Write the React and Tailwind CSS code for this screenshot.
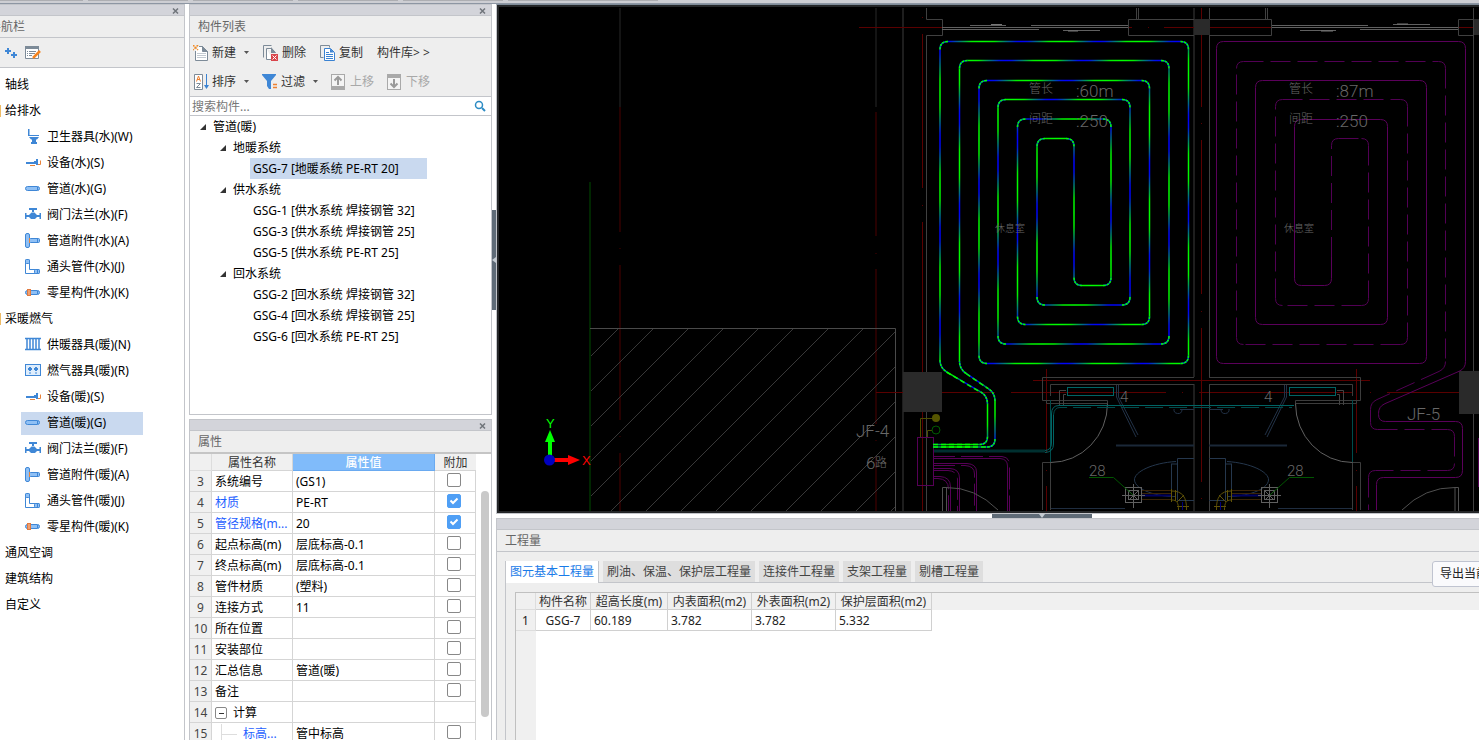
import React, { useState } from 'react';

const NAV = [
    { label: '轴线' },
    {
        label: '给排水',
        open: true,
        items: [
            { label: '卫生器具(水)(W)', icon: 'toilet' },
            { label: '设备(水)(S)', icon: 'device' },
            { label: '管道(水)(G)', icon: 'pipe' },
            { label: '阀门法兰(水)(F)', icon: 'valve' },
            { label: '管道附件(水)(A)', icon: 'fitting' },
            { label: '通头管件(水)(J)', icon: 'elbow' },
            { label: '零星构件(水)(K)', icon: 'misc' },
        ],
    },
    {
        label: '采暖燃气',
        open: true,
        items: [
            { label: '供暖器具(暖)(N)', icon: 'radiator' },
            { label: '燃气器具(暖)(R)', icon: 'gas' },
            { label: '设备(暖)(S)', icon: 'device' },
            { label: '管道(暖)(G)', icon: 'pipe' },
            { label: '阀门法兰(暖)(F)', icon: 'valve' },
            { label: '管道附件(暖)(A)', icon: 'fitting' },
            { label: '通头管件(暖)(J)', icon: 'elbow' },
            { label: '零星构件(暖)(K)', icon: 'misc' },
        ],
    },
    { label: '通风空调' },
    { label: '建筑结构' },
    { label: '自定义' },
];

const TREE = [
    { label: '地暖系统', items: ['GSG-7 [地暖系统 PE-RT 20]'] },
    {
        label: '供水系统',
        items: ['GSG-1 [供水系统 焊接钢管 32]', 'GSG-3 [供水系统 焊接钢管 25]', 'GSG-5 [供水系统 PE-RT 25]'],
    },
    {
        label: '回水系统',
        items: ['GSG-2 [回水系统 焊接钢管 32]', 'GSG-4 [回水系统 焊接钢管 25]', 'GSG-6 [回水系统 PE-RT 25]'],
    },
];

const PROPS = [
    { no: 3, name: '系统编号', value: '(GS1)' },
    { no: 4, name: '材质', value: 'PE-RT', blue: true, checked: true },
    { no: 5, name: '管径规格(m...', value: '20', blue: true, checked: true },
    { no: 6, name: '起点标高(m)', value: '层底标高-0.1' },
    { no: 7, name: '终点标高(m)', value: '层底标高-0.1' },
    { no: 8, name: '管件材质', value: '(塑料)' },
    { no: 9, name: '连接方式', value: '11' },
    { no: 10, name: '所在位置', value: '' },
    { no: 11, name: '安装部位', value: '' },
    { no: 12, name: '汇总信息', value: '管道(暖)' },
    { no: 13, name: '备注', value: '' },
    { no: 14, name: '计算', value: '', group: true },
    { no: 15, name: '标高...', value: '管中标高', blue: true, child: true },
];

const TABS = ['图元基本工程量', '刷油、保温、保护层工程量', '连接件工程量', '支架工程量', '剔槽工程量'];

// ---------- icons ----------
const NavIcon = ({ name }) => {
    const blue = '#3f87d6';
    const light = '#8fc0f5';
    return (
        <svg width="16" height="16" viewBox="0 0 16 16" className="shrink-0" aria-hidden="true">
            {name === 'toilet' && (
                <g fill={blue}>
                    <path d="M3 0h1.500v6H7v1H3z" />
                    <path d="M4 8h10l-2 2.500h-1V13h1v2H6v-2h1v-2.500H6z" />
                    <path d="M7 6h7v1H7z" />
                </g>
            )}
            {name === 'device' && (
                <g>
                    <path d="M1 7h8V6h2V4h2v6h-2V9H1z" fill={blue} />
                    <path d="M5 10.500h5M13 9.500h2.500v-4" stroke="#e8833a" fill="none" />
                </g>
            )}
            {name === 'pipe' && (
                <g>
                    <rect x="0.500" y="5.500" width="14" height="4" rx="2" fill={light} stroke={blue} />
                    <path d="M12.500 6v3" stroke={blue} />
                </g>
            )}
            {name === 'valve' && (
                <g fill={blue}>
                    <path d="M4 1h8v2H9v2H7V3H4z" />
                    <path d="M0 6h1.500v2H4l2.500-2.500h3L12 8h2.500V6H16v6h-1.500v-2H12l-2 2H6l-2-2H1.500v2H0z" />
                </g>
            )}
            {name === 'fitting' && (
                <g>
                    <rect x="0.500" y="0.500" width="4" height="14" rx="1.500" fill={light} stroke={blue} />
                    <rect x="4.500" y="5.500" width="10" height="4" rx="1" fill={light} stroke={blue} />
                    <path d="M4.500 5v5" stroke="#e8833a" />
                    <path d="M12.500 6v3" stroke={blue} />
                </g>
            )}
            {name === 'elbow' && (
                <g stroke={blue}>
                    <path d="M0.500 1h4v9.500H14v4H0.500z" fill="#fff" />
                    <rect x="0.500" y="0.500" width="4" height="4" rx="1" fill={light} />
                    <rect x="9.500" y="10.500" width="5" height="4" rx="1" fill={light} />
                    <path d="M12.500 11v3" />
                </g>
            )}
            {name === 'misc' && (
                <g>
                    <rect x="0.500" y="5.500" width="14" height="4" rx="2" fill={light} stroke={blue} />
                    <path d="M12.500 6v3" stroke={blue} />
                    <rect x="2.500" y="4.500" width="3" height="6" fill="#f0a070" stroke="#e07a40" />
                </g>
            )}
            {name === 'radiator' && (
                <path d="M0 1.500h16M0 12.500h16M2 1v12M5 1v12M8 1v12M11 1v12M14 1v12" stroke={blue} strokeWidth="1.500" fill="none" />
            )}
            {name === 'gas' && (
                <g>
                    <rect x="0.500" y="1.500" width="15" height="11" fill="#deedfc" stroke={blue} />
                    <path d="M5 4v4M3 6h4M11 4v4M9 6h4" stroke={blue} strokeWidth="2" />
                    <path d="M4 10h2M10 10h2" stroke={blue} />
                </g>
            )}
        </svg>
    );
};

const ToolIcon = ({ name }) => (
    <svg width="16" height="16" viewBox="0 0 16 16" className="shrink-0" aria-hidden="true">
        {name === 'new' && (
            <g fill="none">
                <path d="M2.500 6v9.500h12v-9l-5-5H6" fill="#fff" stroke="#7d8b98" />
                <path d="M9.500 1.500v5h5z" fill="#7d8b98" stroke="#7d8b98" />
                <path d="M4 8.500h9M4 10.500h9M4 12.500h9" stroke="#c3cad1" />
                <path d="M0 0l5 5M5 0L0 5" stroke="#f08a24" strokeWidth="1.500" strokeDasharray="2 1" />
            </g>
        )}
        {name === 'delete' && (
            <g fill="none">
                <path d="M0.500 12.500v-12h8" stroke="#7d8b98" />
                <path d="M3.500 3.500v11h6M3.500 3.500h5l4 4" fill="#fff" stroke="#7d8b98" />
                <path d="M8 2l5 6H8z" fill="#7d8b98" />
                <rect x="8" y="9" width="7" height="7" fill="#d9454b" />
                <path d="M9.500 10.500l4 4M13.500 10.500l-4 4" stroke="#fff" />
            </g>
        )}
        {name === 'copy' && (
            <g fill="none">
                <path d="M9.500 2.500v-2h-9v12h3" stroke="#7d8b98" />
                <path d="M4.500 3.500h6l4 4v8h-10z" fill="#fff" stroke="#3a82d2" />
                <path d="M10 3.500v4h4z" fill="#3a82d2" />
                <path d="M6 7.500h3M6 9.500h7M6 11.500h7M6 13.500h7" stroke="#3a82d2" />
            </g>
        )}
        {name === 'sort' && (
            <g fill="none">
                <path d="M1.500 0.500h8v15h-8z" fill="#fff" stroke="#7d8b98" />
                <path d="M3.500 7.500L5.500 2l2 5.500M4 5.500h3" stroke="#ee8130" />
                <path d="M3.500 9.500h4l-4 4h4" stroke="#7d8b98" />
                <path d="M13.500 0v12" stroke="#3a82d2" strokeWidth="1" />
                <path d="M11 11h5l-2.500 4z" fill="#3a82d2" />
            </g>
        )}
        {name === 'filter' && (
            <g>
                <path d="M0 0h14v1L9 7v8H7L5 12V7L0 1z" fill="#3f87d6" />
                <path d="M11 10.500h4M11 13.500h4" stroke="#ee8130" strokeWidth="1.500" />
            </g>
        )}
        {name === 'up' && (
            <g>
                <rect x="0.500" y="0.500" width="13" height="14" fill="#f4f4f4" stroke="#a9a9a9" />
                <path d="M0 12h14v4H0z" fill="#a9a9a9" />
                <path d="M7 11V3M3.500 6.500L7 3l3.500 3.500" stroke="#9a9a9a" strokeWidth="2" fill="none" />
            </g>
        )}
        {name === 'down' && (
            <g>
                <rect x="0.500" y="0.500" width="13" height="15" fill="#f4f4f4" stroke="#a9a9a9" />
                <path d="M0 0h14v4H0z" fill="#a9a9a9" />
                <path d="M7 5v8M3.500 9.500L7 13l3.500-3.500" stroke="#9a9a9a" strokeWidth="2" fill="none" />
            </g>
        )}
    </svg>
);

const Caret = () => (
    <svg width="5" height="3" viewBox="0 0 5 3" className="ml-[5px] shrink-0" aria-hidden="true">
        <path d="M0 0h5L2.500 3z" fill="#555" />
    </svg>
);

// ---------- shared panel pieces ----------
const TitleStrip = ({ closable = true }) => (
    <div className="flex h-[11px] shrink-0 items-end justify-end border-b border-[#c3c5ca] bg-[#d3d4da] pr-[5px] pb-px">
        {closable && (
            <button type="button" aria-label="关闭">
                <svg width="7" height="6" viewBox="0 0 7 6" className="block">
                    <path d="M1 0.500l5 5M6 0.500l-5 5" stroke="#70757b" strokeWidth="1.500" />
                </svg>
            </button>
        )}
    </div>
);

const ToolButton = ({ icon, label, caret, disabled }) => (
    <button
        type="button"
        disabled={disabled}
        className={`flex items-center gap-[3px] whitespace-nowrap ${disabled ? 'text-[#a8a8a8]' : 'text-[#333]'}`}
    >
        {icon && <ToolIcon name={icon} />}
        {label}
        {caret && <Caret />}
    </button>
);

const NavPanel = () => {
    const [active, setActive] = useState('管道(暖)(G)');

    return (
        <aside className="flex w-[185px] shrink-0 flex-col overflow-hidden border-t border-r border-[#c3c5ca] bg-white">
            <TitleStrip />
            <h2 className="-ml-[11px] flex h-[22px] shrink-0 items-center border-b border-[#c3c5ca] bg-[#eee] text-[#666]">
                导航栏
            </h2>
            <div className="flex h-[30px] shrink-0 items-center gap-2 border-b border-[#c3c5ca] bg-[#eee] pl-[5px]">
                <button type="button" aria-label="添加">
                    <svg width="12" height="12" viewBox="0 0 12 12">
                        <path d="M3 1v6M0 4h6M9 5v6M6 8h6" stroke="#3f87d6" strokeWidth="2" />
                    </svg>
                </button>
                <button type="button" aria-label="编辑">
                    <svg width="16" height="14" viewBox="0 0 16 14">
                        <path d="M0.500 0.500h13v12h-13z" fill="#fff" stroke="#7d8b98" />
                        <path d="M0 0h14v3H0z" fill="#7d8b98" />
                        <path d="M2 5.500h1M4 5.500h7M2 7.500h1M4 7.500h6M2 9.500h1M4 9.500h3" stroke="#7d8b98" />
                        <path d="M8 12l7-7" stroke="#f5841f" strokeWidth="2.500" />
                    </svg>
                </button>
            </div>
            <nav className="pt-1">
                {NAV.map((group) => (
                    <div key={group.label}>
                        <div className="flex h-[26px] items-center">
                            <span className={`h-3 w-px ${group.open ? 'bg-[#eebb66]' : ''}`} />
                            <a href="#nav" className="pl-1">
                                {group.label}
                            </a>
                        </div>
                        {group.items?.map((item) => (
                            <div key={item.label} className="flex h-[26px] items-center pl-[21px]">
                                <button
                                    type="button"
                                    onClick={() => setActive(item.label)}
                                    className={`flex h-[23px] w-[122px] items-center gap-[6px] pl-1 whitespace-nowrap ${
                                        active === item.label ? 'bg-[#c9d9ef]' : ''
                                    }`}
                                >
                                    <NavIcon name={item.icon} />
                                    {item.label}
                                </button>
                            </div>
                        ))}
                    </div>
                ))}
            </nav>
        </aside>
    );
};

const Twisty = () => (
    <svg width="6" height="6" viewBox="0 0 6 6" className="shrink-0" aria-hidden="true">
        <path d="M6 0v6H0z" fill="#333" />
    </svg>
);

const ComponentList = () => {
    const [selected, setSelected] = useState(TREE[0].items[0]);

    return (
        <section className="flex h-[411px] shrink-0 flex-col border border-[#c3c5ca] bg-white">
            <TitleStrip />
            <h2 className="flex h-[22px] shrink-0 items-center border-b border-[#c3c5ca] bg-[#eee] pl-2 text-[#666]">
                构件列表
            </h2>
            <div className="h-[59px] shrink-0 border-b border-[#c3c5ca] bg-[#eee] pl-[3px]">
                <div className="flex h-[29px] items-center gap-[14px]">
                    <ToolButton icon="new" label="新建" caret />
                    <ToolButton icon="delete" label="删除" />
                    <ToolButton icon="copy" label="复制" />
                    <ToolButton label="构件库> >" />
                </div>
                <div className="flex h-[29px] items-center gap-[13px]">
                    <ToolButton icon="sort" label="排序" caret />
                    <ToolButton icon="filter" label="过滤" caret />
                    <ToolButton icon="up" label="上移" disabled />
                    <ToolButton icon="down" label="下移" disabled />
                </div>
            </div>
            <div className="flex h-[19px] shrink-0 items-center border-b border-[#c3c5ca] pr-[5px]">
                <input
                    type="text"
                    aria-label="搜索构件"
                    placeholder="搜索构件..."
                    className="h-[18px] min-w-0 flex-1 pl-[2px] outline-none placeholder:text-[#777]"
                />
                <svg width="12" height="12" viewBox="0 0 12 12" aria-hidden="true">
                    <circle cx="5" cy="5" r="3.500" fill="none" stroke="#2d8cc4" strokeWidth="1.500" />
                    <path d="M8 8l3 3" stroke="#2d8cc4" strokeWidth="2" />
                </svg>
            </div>
            <div className="overflow-hidden">
                <div className="flex h-[21px] items-center gap-[7px] pl-[10px]">
                    <Twisty />
                    管道(暖)
                </div>
                {TREE.map((group) => (
                    <div key={group.label}>
                        <div className="flex h-[21px] items-center gap-[7px] pl-[30px]">
                            <Twisty />
                            {group.label}
                        </div>
                        {group.items.map((item) => (
                            <button
                                key={item}
                                type="button"
                                onClick={() => setSelected(item)}
                                className={`ml-[60px] flex h-[21px] w-[177px] items-center pl-[3px] whitespace-nowrap ${
                                    selected === item ? 'bg-[#c9d9ef]' : ''
                                }`}
                            >
                                {item}
                            </button>
                        ))}
                    </div>
                ))}
            </div>
        </section>
    );
};

const PropCheck = ({ label, initial }) => (
    <span className="relative mx-auto block size-[14px]">
        <input
            type="checkbox"
            aria-label={label}
            defaultChecked={initial}
            className="peer block size-[14px] appearance-none rounded-[2px] border border-[#888] bg-white checked:border-[#4f9ff5] checked:bg-[#4f9ff5]"
        />
        <svg
            width="14"
            height="14"
            viewBox="0 0 14 14"
            className="pointer-events-none absolute inset-0 hidden peer-checked:block"
            aria-hidden="true"
        >
            <path d="M3.500 6.500L6 9l4.500-4.500" fill="none" stroke="#fff" strokeWidth="2" />
        </svg>
    </span>
);

const PropertyPanel = () => (
    <section className="flex min-h-0 flex-1 flex-col overflow-hidden border border-b-0 border-[#c3c5ca] bg-white">
        <TitleStrip />
        <h2 className="flex h-[23px] shrink-0 items-center border-b-2 border-[#c5c5c5] bg-[#eee] pl-2 text-[#666]">
            属性
        </h2>
        <div className="flex min-h-0 flex-1 overflow-hidden">
            <table className="w-[286px] table-fixed border-separate border-spacing-0 self-start">
                <colgroup>
                    <col className="w-[22px]" />
                    <col className="w-[81px]" />
                    <col className="w-[142px]" />
                    <col className="w-[41px]" />
                </colgroup>
                <thead>
                    <tr className="h-[17px] bg-[#f0f0f0] leading-[14px] text-[#333]">
                        <th className="border-r border-b border-[#ddd]" />
                        <th className="border-r border-b border-[#d5d5d5] pt-[2px] font-normal">属性名称</th>
                        <th className="border-r border-b border-[#6aaaf0] bg-[#80bbfa] pt-[2px] font-medium text-white">属性值</th>
                        <th className="border-b border-[#d5d5d5] pt-[2px] font-normal">附加</th>
                    </tr>
                </thead>
                <tbody>
                    {PROPS.map((row) => (
                        <tr key={row.no} className="h-[21px] leading-[18px]">
                            <td className="border-r border-b border-[#d5d5d5] bg-[#f0f0f0] pt-[2px] text-center text-[#444]">
                                {row.no}
                            </td>
                            <td
                                className={`overflow-hidden border-r border-b border-[#d5d5d5] pt-[2px] pl-[3px] whitespace-nowrap ${
                                    row.blue ? 'text-[#1f5fff]' : ''
                                }`}
                            >
                                {row.group && (
                                    <span className="flex items-center gap-[6px]">
                                        <button
                                            type="button"
                                            aria-label="折叠"
                                            className="flex size-[12px] items-center justify-center rounded-[2px] border border-[#888]"
                                        >
                                            <span className="h-px w-[5px] bg-[#333]" />
                                        </button>
                                        {row.name}
                                    </span>
                                )}
                                {row.child && (
                                    <span className="ml-[6px] flex h-[18px] items-center gap-[6px]">
                                        <span className="h-5 w-px bg-[#ddd]" />
                                        <span className="-ml-[6px] h-px w-[15px] bg-[#ddd]" />
                                        {row.name}
                                    </span>
                                )}
                                {!row.group && !row.child && row.name}
                            </td>
                            <td className="border-r border-b border-[#d5d5d5] pt-[2px] pl-[3px]">{row.value}</td>
                            <td className="border-r border-b border-[#d5d5d5] pr-[2px] pb-[2px]">
                                {!row.group && <PropCheck label={`附加 ${row.name}`} initial={row.checked} />}
                            </td>
                        </tr>
                    ))}
                </tbody>
            </table>
            <div className="flex-1 pt-[37px] pl-[5px]">
                <div className="h-[226px] w-2 rounded-full bg-[#c9c9c9]" />
            </div>
        </div>
    </section>
);

// ---------- drawing ----------
// Splits a polyline into straight runs and rounded corners
const roundPath = (pts, r) => {
    let lines = '';
    let arcs = '';
    let start = pts[0];
    for (let i = 1; i < pts.length; i++) {
        const [x, y] = pts[i];
        const dx = x - start[0];
        const dy = y - start[1];
        const len = Math.hypot(dx, dy);
        if (i === pts.length - 1) {
            lines += `M${start}L${x},${y}`;
            break;
        }
        const end = [x - (dx / len) * r, y - (dy / len) * r];
        const nx = pts[i + 1][0] - x;
        const ny = pts[i + 1][1] - y;
        const nlen = Math.hypot(nx, ny);
        const next = [x + (nx / nlen) * r, y + (ny / nlen) * r];
        lines += `M${start}L${end}`;
        arcs += `M${end}Q${x},${y} ${next}`;
        start = next;
    }
    return { lines, arcs };
};

const LEFT_LOOP = roundPath(
    [
        [933, 447], [995, 447], [995, 393], [959.5, 369], [959.5, 60.5], [1169, 60.5], [1169, 344], [998, 344], [998, 99.5],
        [1130, 99.5], [1130, 305], [1037, 305], [1037, 138.5], [1074, 138.5], [1074, 285.5], [1111, 285.5], [1111, 119],
        [1017.5, 119], [1017.5, 324.5], [1149.5, 324.5], [1149.5, 80.5], [979, 80.5], [979, 363.5], [1188.5, 363.5],
        [1188.5, 41.5], [940, 41.5], [940, 368], [987.5, 396], [987.5, 444.5], [933, 444.5],
    ],
    8
);

const RIGHT_SUPPLY = roundPath(
    [
        [1331.5, 257], [1331.5, 285.5], [1294.5, 285.5], [1294.5, 119.5], [1387.5, 119.5], [1387.5, 324.5], [1255.5, 324.5],
        [1255.5, 80.5], [1426.5, 80.5], [1426.5, 363.5], [1216.5, 363.5], [1216.5, 41.5], [1465.5, 41.5], [1465.5, 368.5],
        [1378.5, 406.5], [1378.5, 421.5], [1462.5, 421.5], [1462.5, 477.5], [1376.5, 477.5], [1376.5, 510],
    ],
    7
);

const RIGHT_RETURN = roundPath(
    [
        [1331.5, 257], [1331.5, 138.5], [1368.5, 138.5], [1368.5, 305.5], [1275.5, 305.5], [1275.5, 99.5], [1407.5, 99.5],
        [1407.5, 344.5], [1236.5, 344.5], [1236.5, 61.5], [1445.5, 61.5], [1445.5, 368.5], [1370.5, 402.5], [1370.5, 429.5],
        [1454.5, 429.5], [1454.5, 470.5], [1368.5, 470.5], [1368.5, 510],
    ],
    7
);

const HATCH = [...Array(14)].map((_, i) => 947 + i * 35);

const Bathroom = () => (
    <g fill="none">
        <path d="M1194 377.500H1042.500V400.500H1107.500V403.500H1046.500V400M1194 384.500H1050.500V396M1042.500 510V462.500H1050.500M1050.500 462V510" stroke="#3c3c3c" />
        <path d="M1107.500 403.500A57 59 0 0 1 1050.500 462.500" stroke="#606060" />
        <path d="M1066 390.500H1059.500V405M1066 394.500H1063.500V405" stroke="#444" />
        <rect x="1067.500" y="387.500" width="46" height="8" stroke="#006464" />
        <path d="M1050.500 400V462" stroke="#004c4c" />
        <path d="M1116.500 385V397L1136 437M1118.500 385V397L1138 435" stroke="#223247" />
        <path d="M1116 445.500H1194" stroke="#1b2838" strokeWidth="2" />
        <path d="M1194 409.500H1180M1174 409a4 4 0 1 0 8 1" stroke="#223247" />
        <path d="M1194 458.500H1177.500V500.500H1194M1171.500 464V496M1176 461.500C1152 463 1134 472 1134.500 480C1135 490 1158 497 1176 496.500M1177 464H1171" stroke="#25374d" />
        <path d="M1142 490.500H1172M1142 499.500H1172M1142 493.500H1172" stroke="#3a2308" />
        <path d="M1142 495.500H1172" stroke="#000060" strokeWidth="2" />
        <path d="M1172 491C1182 491 1187 497 1186.500 510M1172 500C1177 500 1178.500 503 1178.500 510M1171.500 489V502M1175.500 490V501M1177 506.500H1189M1177 502L1184 495" stroke="#5f5208" />
        <path d="M1182.500 502V510" stroke="#00007a" />
        <g stroke="#606060">
            <rect x="1125.500" y="487.500" width="16" height="15" />
            <rect x="1128.500" y="490.500" width="10" height="9" />
            <path d="M1122 495.500H1145M1133.500 484V508M1129 491L1138 500M1138 491L1129 500" />
        </g>
        <path d="M1089 477.500H1113.500L1133 495" stroke="#005500" />
        <path d="M1051 508.500H1125" stroke="#1f2d40" />
    </g>
);

const Drawing = () => (
    <svg viewBox="499 7 980 504" preserveAspectRatio="xMinYMin slice" className="block h-full w-full" role="img" aria-label="平面图">
        <defs>
            <linearGradient id="flow" gradientUnits="userSpaceOnUse" x1="1022" y1="41" x2="1045" y2="60" spreadMethod="reflect">
                <stop offset="0" stopColor="#0000ff" />
                <stop offset="0.150" stopColor="#0010e8" />
                <stop offset="0.550" stopColor="#00b040" />
                <stop offset="0.700" stopColor="#00f000" />
                <stop offset="1" stopColor="#00ff00" />
            </linearGradient>
            <clipPath id="hatchArea">
                <rect x="591" y="329" width="304" height="182" />
            </clipPath>
        </defs>
        <rect x="499" y="7" width="980" height="504" fill="#000" />

        {/* axis lines and walls */}
        <g fill="none">
            <path d="M620 8V107M876 8V107" stroke="#141414" strokeWidth="2" />
            <path d="M620 107V232M620 248v1M620 265V420M620 436v1M620 453V511M876 112V236M876 253v1M876 269V424M876 440v1M876 456V511" stroke="#260000" strokeWidth="2" />
            <path d="M590 182V511" stroke="#002600" strokeWidth="2" />
            <path d="M903 8V511M1194 8V377M1194 384V511" stroke="#1e1e1e" strokeWidth="2" />
            <g clipPath="url(#hatchArea)" stroke="#383838">
                {HATCH.map((c) => (
                    <path key={c} d={`M${c - 328} 328L${c - 511} 511`} />
                ))}
            </g>
            <path d="M590 328.500H895.500V511" stroke="#4a4a4a" />
            <path
                d="M922.500 17v1M922.500 34V188M922.500 205v1M922.500 222V511M1201.500 8V107M1201.500 123v1M1201.500 140V294M1201.500 311v1M1201.500 328V482M1201.500 498v1M1046.500 369V453M1046.500 470v1M1046.500 486V511M1356.500 369V453M1356.500 470v1M1356.500 486V511M859 27.500H942M1128 27.500H1132M1148 27.500h1M1164 27.500H1272M1458 27.500H1474M876 392.500H903M942 392.500H995M1011 392.500H1166M1182 392.500h1M1199 392.500H1353M1370 392.500h1M1387 392.500H1459M1033 380.500H1370"
                stroke="#5a0000"
            />
            <path d="M926.500 8V19.500H942.500V35.500H926.500V511M1194 19.500H1128.500V35.500H1194M1209 19.500H1271.500V35.500H1209M1474 19.500H1458.500V35.500H1474M1209.500 8V377M1209.500 384V511M1473.500 8V511M1136.500 8V19M1138.500 8V19M1265.500 8V19M1267.500 8V19" stroke="#404040" />
            <path d="M942 27.500H1128M1031 25.500H1128M942 29.500H1039M970 25.500H1006M1063 30.500H1100M1272 25.500H1368M1272 27.500H1458M1360 29.500H1458M1300 30.500H1336M1393 24.500H1430" stroke="#606060" />
            <path d="M991 24.500H1002M1068 31H1078M1321 31H1333M1397 24H1408" stroke="#777" />
        </g>
        <g fill="#2a2a2a">
            <rect x="1194" y="19" width="16" height="16" />
            <rect x="1474" y="19" width="5" height="16" />
            <rect x="903" y="372" width="39" height="40" />
            <rect x="1459" y="371" width="20" height="43" />
        </g>

        <Bathroom />
        <g transform="translate(2403 0) scale(-1 1)">
            <Bathroom />
        </g>

        {/* supply and return headers */}
        <g fill="none">
            <path d="M933 451H1045" stroke="#003030" strokeWidth="3" />
            <path d="M1045 450.500Q1051.500 450 1051.500 443V414Q1051.500 405.500 1059 405.500H1294M1045 452.500Q1053.500 452 1053.500 444V415" stroke="#006464" />
            <path d="M1053.500 415Q1054 407.500 1060 407.500H1292" stroke="#004c4c" strokeDasharray="18 6" />
            <g stroke="#560056">
                <rect x="917.500" y="437.500" width="16" height="48" />
                <path d="M933 458.500H1000Q1007.500 459 1007.500 466V511M933 463.500H967Q976.500 464 976.500 472V511M933 468.500H950Q959.500 469 959.500 478V511M933 476.500H940Q950.500 477 950.500 487V511" />
                <path d="M933 456.500H1002Q1009.500 457 1009.500 465V511M933 465.500H965Q974.500 466 974.500 474V511M933 470.500H948Q957.500 471 957.500 480V511M933 478.500H938Q948.500 479 948.500 489V511" strokeDasharray="22 6" />
                <path d="M1478.500 438V487" />
            </g>
            <path d="M942.500 511V487.500H946.500V511M1458.500 511V487.500H1455V511M946 487.500Q975 487 998 510M1455 487.500Q1425 487 1402 510" stroke="#505050" />
            <path d="M920.500 437V418.500H933M927.500 437V430.500H932" stroke="#4d4d00" />
            <circle cx="936" cy="418" r="4" fill="#555500" />
            <circle cx="936" cy="430" r="4" stroke="#005a00" />
        </g>

        {/* floor heating loops */}
        <g fill="none">
            <path d={RIGHT_SUPPLY.lines + RIGHT_SUPPLY.arcs} stroke="#5a005a" />
            <path d={RIGHT_RETURN.lines} stroke="#520054" strokeDasharray="20 7" />
            <path d={RIGHT_RETURN.arcs} stroke="#520054" />
            <path d={LEFT_LOOP.lines} stroke="url(#flow)" strokeWidth="1.500" />
            <path d={LEFT_LOOP.arcs} stroke="#0040e0" strokeWidth="1.500" />
            <path d={LEFT_LOOP.arcs} stroke="#00ff00" strokeWidth="1.500" strokeDasharray="2.500 1" />
            <path d="M933 444.500H980M933 447H988M946.500 372L980 392M966 373.500L988 388.500" stroke="#00ff00" strokeWidth="1.500" strokeDasharray="5 3" />
        </g>

        {/* annotations */}
        <g fill="#686868" className="font-['Liberation_Sans_Narrow','Roboto','Noto_Sans_CJK_SC',sans-serif] font-light">
            <g fontSize="17">
                <text x="1076" y="97">:60m</text>
                <text x="1076" y="127">:250</text>
                <text x="1336" y="97">:87m</text>
                <text x="1336" y="127">:250</text>
                <text x="856" y="437">JF-4</text>
                <text x="1407" y="420">JF-5</text>
                <text x="866" y="469">6</text>
            </g>
            <g fontSize="15">
                <text x="1089" y="476">28</text>
                <text x="1287" y="476">28</text>
                <text x="1120" y="402">4</text>
                <text x="1264" y="402">4</text>
            </g>
            <g fontSize="12">
                <text x="1029" y="93">管长</text>
                <text x="1029" y="123">间距</text>
                <text x="1289" y="93">管长</text>
                <text x="1289" y="123">间距</text>
                <text x="875" y="467">路</text>
            </g>
            <g fontSize="10">
                <text x="995" y="232">休息室</text>
                <text x="1284" y="232">休息室</text>
            </g>
        </g>

        {/* UCS marker */}
        <rect x="548" y="440" width="4" height="17" fill="#00ff00" />
        <path d="M550 430L555 442H545z" fill="#00ff00" />
        <rect x="553" y="458" width="16" height="4" fill="#ff0000" />
        <path d="M580 460L568 455V465z" fill="#ff0000" />
        <circle cx="549.500" cy="460" r="5.500" fill="#0000c0" />
        <g fontSize="13" className="font-['Liberation_Sans',sans-serif]">
            <text x="546" y="428" fill="#00ff00">Y</text>
            <text x="582" y="465" fill="#ff0000">X</text>
        </g>
    </svg>
);

const QuantityPanel = () => {
    const [tab, setTab] = useState(TABS[0]);

    return (
        <section className="ml-1 flex h-[222px] shrink-0 flex-col overflow-hidden border-t border-l border-[#c3c5ca] bg-[#eee]">
            <TitleStrip closable={false} />
            <h2 className="flex h-[22px] shrink-0 items-center border-b border-[#c3c5ca] pl-2 text-[#666]">工程量</h2>
            <div className="flex min-h-0 flex-1 flex-col pt-[9px] pl-2">
                <div className="flex h-[22px] shrink-0 gap-1 border-b border-[#c3c5ca]" role="tablist">
                    {TABS.map((name) => (
                        <button
                            key={name}
                            type="button"
                            role="tab"
                            aria-selected={tab === name}
                            onClick={() => setTab(name)}
                            className={
                                tab === name
                                    ? '-mb-px shrink-0 border-r border-l border-[#c3c5ca] bg-white px-1 whitespace-nowrap text-[#1a7be8]'
                                    : 'shrink-0 bg-[#dedede] px-1 whitespace-nowrap text-[#444]'
                            }
                        >
                            {name}
                        </button>
                    ))}
                    <div className="ml-auto h-[26px] w-[47px] shrink-0 overflow-hidden">
                        <button
                            type="button"
                            className="h-[26px] rounded-[3px] border border-[#c0c4d0] bg-[#fafafc] px-[7px] whitespace-nowrap text-[#222]"
                        >
                            导出当前工程量
                        </button>
                    </div>
                </div>
                <div className="min-h-0 flex-1 border-l border-[#c3c5ca] pt-[9px] pl-[9px]">
                    <table className="h-full w-full table-fixed border-separate border-spacing-0 border-t border-l border-[#c0c0c0] bg-white">
                        <colgroup>
                            <col className="w-[20px]" />
                            <col className="w-[55px]" />
                            <col className="w-[77px]" />
                            <col className="w-[84px]" />
                            <col className="w-[84px]" />
                            <col className="w-[96px]" />
                            <col />
                        </colgroup>
                        <thead>
                            <tr className="h-[17px] bg-[#f0f0f0] leading-[14px] whitespace-nowrap text-[#333]">
                                <th className="border-r border-b border-[#ddd]" />
                                {['构件名称', '超高长度(m)', '内表面积(m2)', '外表面积(m2)', '保护层面积(m2)'].map((h) => (
                                    <th key={h} className="border-r border-b border-[#d0d0d0] pt-[2px] font-normal">
                                        {h}
                                    </th>
                                ))}
                                <th />
                            </tr>
                        </thead>
                        <tbody>
                            <tr className="h-[21px] leading-[18px] text-[#222]">
                                <td className="border-r border-b border-[#ddd] bg-[#f0f0f0] pt-[2px] text-center">1</td>
                                <td className="border-r border-b border-[#d0d0d0] pt-[2px] text-center">GSG-7</td>
                                {['60.189', '3.782', '3.782', '5.332'].map((v, i) => (
                                    <td key={i} className="border-r border-b border-[#d0d0d0] pt-[2px] pl-[3px]">
                                        {v}
                                    </td>
                                ))}
                                <td />
                            </tr>
                            <tr>
                                <td className="bg-[#f0f0f0]" />
                                <td colSpan={6} />
                            </tr>
                        </tbody>
                    </table>
                </div>
            </div>
        </section>
    );
};

const App = () => (
    <div className="flex h-screen flex-col overflow-hidden bg-white font-['Noto_Sans','Noto_Sans_CJK_SC',sans-serif] text-[12px] leading-4 text-black">
        <div className="flex h-1 shrink-0 gap-[5px] border-b border-[#8d96a3] bg-[#cdced3]">
            <span className="h-px w-[83px] bg-[#adaeb2]" />
            <span className="h-px w-[100px] bg-[#adaeb2]" />
            <span className="h-px w-[100px] bg-[#adaeb2]" />
            <span className="h-px w-[100px] bg-[#adaeb2]" />
            <span className="h-px w-[100px] bg-[#adaeb2]" />
            <span className="h-px w-[150px] bg-[#adaeb2]" />
        </div>
        <div className="flex min-h-0 flex-1">
            <NavPanel />
            <div className="ml-1 flex w-[303px] shrink-0 flex-col gap-1">
                <ComponentList />
                <PropertyPanel />
            </div>
            <main className="flex min-w-0 flex-1 flex-col">
                <div className="flex min-h-0 flex-1">
                    <div className="flex w-1 shrink-0 items-center pt-[2px]">
                        <button type="button" aria-label="收起左侧" className="flex h-[100px] w-1 items-center bg-[#5f6b77]">
                            <svg width="4" height="6" viewBox="0 0 4 6">
                                <path d="M4 0v6L0 3z" fill="#c5ccd3" />
                            </svg>
                        </button>
                    </div>
                    <div className="min-w-0 flex-1 border-t border-b border-l border-t-[#7f8c99] border-b-[#c3c5ca] border-l-[#c3c5ca]">
                        <div className="h-full border-2 border-r-0 border-[#242628] bg-black">
                            <Drawing />
                        </div>
                    </div>
                </div>
                <div className="flex h-1 shrink-0 justify-center pl-28">
                    <button type="button" aria-label="收起下方" className="flex h-1 w-[100px] justify-center bg-[#5f6b77]">
                        <svg width="6" height="4" viewBox="0 0 6 4">
                            <path d="M0 0h6L3 4z" fill="#c5ccd3" />
                        </svg>
                    </button>
                </div>
                <QuantityPanel />
            </main>
        </div>
    </div>
);

export default App;
